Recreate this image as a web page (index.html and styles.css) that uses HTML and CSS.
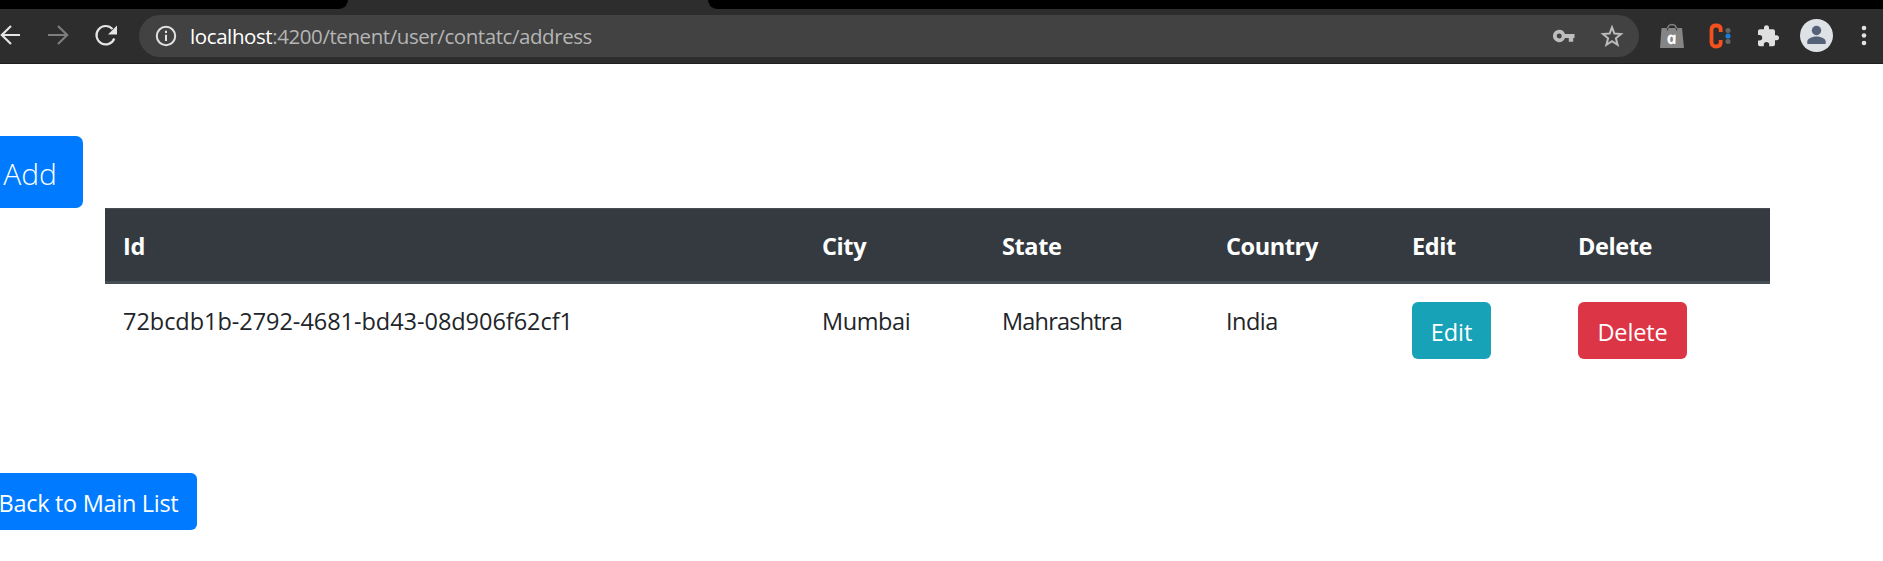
FILE: index.html
```
<!DOCTYPE html>
<html lang="en">
<head>
<meta charset="utf-8">
<title>Address</title>
<link rel="stylesheet" href="styles.css">
</head>
<body>
<header class="browser">
  <div class="tabs"><div class="tab-left"></div><div class="tab-right"></div></div>
  <div class="toolbar">
    <svg class="nav" width="124" height="54" viewBox="0 9 124 54" fill="none" stroke="#e4e4e4" stroke-width="2.2">
      <path d="M20 35H1.5M11 26L1.8 35l9.2 9"/>
      <path d="M48 35h19M58 26l9.2 9-9.2 9" stroke="#7d7d7d"/>
      <path d="M114.3 38.5A9.2 9.2 0 1 1 112.5 29"/>
      <path d="M117 25.5v9h-9z" fill="#e4e4e4" stroke="none"/>
    </svg>
    <div class="omnibox">
      <svg class="info" width="22" height="22" viewBox="0 0 22 22" fill="none" stroke="#e2e2e2" stroke-width="2"><circle cx="11" cy="11" r="9.2"/><path d="M11 9.8V16M11 5.8v2.1"/></svg>
      <span class="url"><span class="host">localhost</span>:4200/tenent/user/contatc/address</span>
      <svg class="key" width="22" height="14" viewBox="0 0 22 14"><path fill="#bdbdbd" fill-rule="evenodd" d="M6.2.8a6.2 6.2 0 1 0 5.8 8.3h3.8v3.6h4.4V9.1H21.500V5H12A6.200 6.200 0 0 0 6.200.8Zm0 3.700a2.500 2.500 0 1 1 0 5 2.500 2.500 0 0 1 0-5Z"/></svg>
      <svg class="star" width="24" height="24" viewBox="0 0 24 24"><path fill="none" stroke="#bdbdbd" stroke-width="2" d="M12 3.300l2.400 6.200 6.600.5-5.100 4.300 1.700 6.500-5.600-3.600-5.600 3.600 1.700-6.500L3 10l6.600-.5z"/></svg>
    </div>
    <svg class="extensions" width="244" height="54" viewBox="1639 9 244 54">
      <path d="M1661.500 28h20.500l2 20h-24z" fill="#858585"/>
      <path d="M1667.500 30v-1a4.500 4.500 0 0 1 9 0v1" fill="none" stroke="#858585" stroke-width="1.500"/>
      <path d="M1667.500 30.500v-2.500M1676.500 30.500v-2.500" stroke="#444" stroke-width="1.300"/>
      <text transform="translate(1672.500 43.500) skewX(11)" class="bag-letter" text-anchor="middle">a</text>
      <path d="M1720.700 32V29.500q0-4-4.500-4t-4.700 4v13q.2 4 4.700 4t4.500-4V40" fill="none" stroke="#f4511e" stroke-width="3.800"/>
      <circle cx="1728" cy="30.500" r="2.500" fill="#666"/><circle cx="1728" cy="41.500" r="2.500" fill="#666"/><circle cx="1728" cy="36" r="2.600" fill="#1c7ed6"/>
      <path transform="translate(1756 24.200)" fill="#e0e0e0" d="M20.500 11H19V7c0-1.100-.9-2-2-2h-4V3.500a2.500 2.500 0 0 0-5 0V5H4c-1.100 0-2 .9-2 2v3.800h1.500a2.700 2.700 0 0 1 0 5.400H2V20c0 1.100.9 2 2 2h3.800v-1.500a2.700 2.700 0 0 1 5.400 0V22H17c1.100 0 2-.9 2-2v-4h1.500a2.500 2.500 0 0 0 0-5z"/>
      <circle cx="1816.500" cy="35.500" r="16.500" fill="#dee1e6"/>
      <circle cx="1816.500" cy="30.500" r="4.700" fill="#556176"/>
      <path d="M1807.300 44v-2.500c0-3.200 6-5 9.200-5s9.200 1.800 9.200 5V44z" fill="#556176"/>
      <g fill="#e2e2e2"><circle cx="1864" cy="28" r="2.300"/><circle cx="1864" cy="35.500" r="2.300"/><circle cx="1864" cy="43" r="2.300"/></g>
    </svg>
  </div>
</header>
<main class="page">
  <button class="btn btn-primary btn-add">Add</button>
  <table class="table">
    <colgroup><col class="c-id"><col class="c-city"><col class="c-state"><col class="c-country"><col class="c-edit"><col class="c-delete"></colgroup>
    <thead><tr><th>Id</th><th>City</th><th>State</th><th>Country</th><th>Edit</th><th>Delete</th></tr></thead>
    <tbody><tr>
      <td class="uuid">72bcdb1b-2792-4681-bd43-08d906f62cf1</td><td class="city">Mumbai</td><td class="state">Mahrashtra</td><td class="country">India</td>
      <td class="action"><button class="btn btn-info">Edit</button></td><td class="action"><button class="btn btn-danger">Delete</button></td>
    </tr></tbody>
  </table>
  <button class="btn btn-primary btn-back">Back to Main List</button>
</main>
</body>
</html>
```
FILE: styles.css
```
* { box-sizing: border-box; }
body {
  margin: 0;
  height: 561px;
  overflow: hidden;
  background: #fff;
  color: #212529;
  font: 23.5px/36px "Open Sans", "Noto Sans", sans-serif;
}
.browser { height: 64px; background: #2d2d2d; border-bottom: 1px solid #1f1f1f; }
.tabs { display: flex; justify-content: space-between; height: 9px; }
.tab-left { width: 348px; background: #000; border-bottom-right-radius: 9px; }
.tab-right { width: 1175px; background: #000; border-bottom-left-radius: 9px; }
.toolbar { display: flex; height: 54px; }
.nav { flex: none; margin-right: 15px; }
.omnibox {
  display: flex;
  align-items: center;
  width: 1500px;
  height: 42px;
  margin-top: 6px;
  padding: 0 15px 0 16px;
  border-radius: 21px;
  background: #424242;
}
.info { margin-right: 13px; }
.url { flex: 1; color: #b5b5b5; font-size: 20.5px; letter-spacing: -0.43px; white-space: nowrap; }
.host { color: #fff; letter-spacing: -0.4px; }
.key { margin-right: 25px; }
.extensions { flex: none; }
.bag-letter { font: italic 700 17px "Open Sans", sans-serif; fill: #fff; }

.page { display: flex; flex-direction: column; align-items: flex-start; padding-top: 72px; }
.btn {
  display: block;
  height: 57px;
  padding: 3px 0 0;
  border: 0;
  border-radius: 6px;
  color: #fff;
  font: inherit;
  text-align: center;
  white-space: nowrap;
}
.btn-primary { background: #007bff; }
.btn-info { width: 79px; background: #17a2b8; }
.btn-danger { width: 109px; background: #dc3545; letter-spacing: -0.15px; }
.btn-add {
  width: 109px;
  height: 72px;
  margin-left: -26px;
  padding-left: 3px;
  border-radius: 7px;
  font-size: 30px;
  font-weight: 300;
}
.btn-back { width: 217px; margin: 96px 0 0 -20px; letter-spacing: -0.3px; }

.table { width: 1665px; margin-left: 105px; table-layout: fixed; border-collapse: separate; border-spacing: 0; }
.c-id { width: 699px; }
.c-city { width: 180px; }
.c-state { width: 224px; }
.c-country { width: 186px; }
.c-edit { width: 166px; }
.c-delete { width: 210px; }
.table th {
  height: 76px;
  padding: 19px 18px 17px;
  border-top: 1px solid #454d55;
  border-bottom: 3px solid #454d55;
  background: #343a40;
  color: #fff;
  font-weight: 700;
  text-align: left;
  letter-spacing: -0.4px;
}
.table td { height: 93px; padding: 19px 18px 18px; vertical-align: top; }
.table .action { padding-top: 18px; }
.table .uuid { letter-spacing: -0.04px; }
.table .city { letter-spacing: -0.4px; }
.table .state { letter-spacing: -0.8px; }
.table .country { letter-spacing: -0.5px; }
```
